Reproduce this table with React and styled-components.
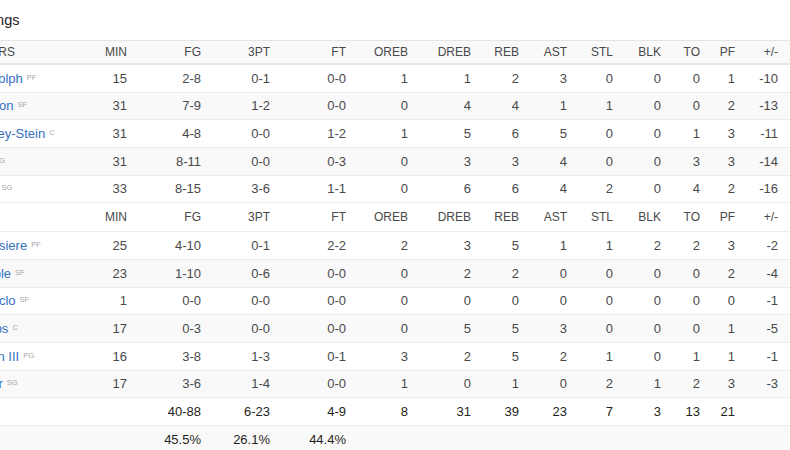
import React from "react";
import styled, { createGlobalStyle } from "styled-components";

const Global = createGlobalStyle`
  html, body { margin: 0; padding: 0; background: #fff; overflow: hidden; }
  body { font-family: "Liberation Sans", Arial, sans-serif; }
`;

const COLS = "143px 40px 74px 69px 76px 62px 63px 48px 48px 46px 48px 39px 35px 55px";

const Page = styled.div`
  width: 920px;
  margin-left: -124px;
`;

const Title = styled.h2`
  margin: 0;
  padding: 11px 0 0 25px;
  height: 40px;
  box-sizing: border-box;
  font-size: 14.5px;
  line-height: 18px;
  font-weight: 400;
  color: #1f2021;
`;

const Table = styled.div`
  margin-left: 68px;
  width: 846px;
  border-top: 1px solid #e4e4e4;
`;

const Row = styled.div`
  display: grid;
  grid-template-columns: ${COLS};
  align-items: center;
  box-sizing: border-box;
  height: ${(p) => p.$h || 27.67}px;
  border-bottom: ${(p) => (p.$thick ? "2px solid #e6e6e6" : "1px solid #ececec")};
  background: ${(p) => (p.$gray ? "#f9f9f9" : "#fff")};
  font-size: 13px;
  color: ${(p) => (p.$total ? "#1e1f20" : "#48494a")};
`;

const HeadCell = styled.div`
  font-size: 12px;
  color: #48494a;
  text-align: ${(p) => (p.$left ? "left" : "right")};
  padding-left: ${(p) => (p.$left ? "8px" : "0")};
  padding-right: ${(p) => (p.$last ? "12px" : "0")};
  white-space: nowrap;
  overflow: hidden;
`;

const Cell = styled.div`
  text-align: right;
  padding-right: ${(p) => (p.$last ? "12px" : "0")};
  white-space: nowrap;
`;

const NameCell = styled.div`
  padding-left: 8px;
  white-space: nowrap;
  overflow: hidden;
`;

const PlayerLink = styled.a`
  color: #3470bf;
  text-decoration: none;
`;

const Pos = styled.span`
  margin-left: 4px;
  font-size: 7.5px;
  color: #a5a6a7;
  vertical-align: 3px;
`;

const HEAD = ["MIN", "FG", "3PT", "FT", "OREB", "DREB", "REB", "AST", "STL", "BLK", "TO", "PF", "+/-"];

const starters = [
  ["Z. Randolph", "PF", 15, "2-8", "0-1", "0-0", 1, 1, 2, 3, 0, 0, 0, 1, -10],
  ["J. Jackson", "SF", 31, "7-9", "1-2", "0-0", 0, 4, 4, 1, 1, 0, 0, 2, -13],
  ["W. Cauley-Stein", "C", 31, "4-8", "0-0", "1-2", 1, 5, 6, 5, 0, 0, 1, 3, -11],
  ["D. Fox", "PG", 31, "8-11", "0-0", "0-3", 0, 3, 3, 4, 0, 0, 3, 3, -14],
  ["B. Hield", "SG", 33, "8-15", "3-6", "1-1", 0, 6, 6, 4, 2, 0, 4, 2, -16],
];

const bench = [
  ["S. Labissiere", "PF", 25, "4-10", "0-1", "2-2", 2, 3, 5, 1, 1, 2, 2, 3, -2],
  ["G. Temple", "SF", 23, "1-10", "0-6", "0-0", 0, 2, 2, 0, 0, 0, 0, 2, -4],
  ["B. Caboclo", "SF", 1, "0-0", "0-0", "0-0", 0, 0, 0, 0, 0, 0, 0, 0, -1],
  ["K. Koufos", "C", 17, "0-3", "0-0", "0-0", 0, 5, 5, 3, 0, 0, 0, 1, -5],
  ["F. Mason III", "PG", 16, "3-8", "1-3", "0-1", 3, 2, 5, 2, 1, 0, 1, 1, -1],
  ["V. Carter", "SG", 17, "3-6", "1-4", "0-0", 1, 0, 1, 0, 2, 1, 2, 3, -3],
];

const totals = ["", "40-88", "6-23", "4-9", 8, 31, 39, 23, 7, 3, 13, 21, ""];
const pcts = ["", "45.5%", "26.1%", "44.4%", "", "", "", "", "", "", "", "", ""];

function Header({ label, gray, thick, h }) {
  return (
    <Row $gray={gray} $thick={thick} $h={h}>
      <HeadCell $left>{label}</HeadCell>
      {HEAD.map((c, i) => (
        <HeadCell key={c} $last={i === HEAD.length - 1}>{c}</HeadCell>
      ))}
    </Row>
  );
}

function PlayerRow({ p, gray }) {
  const [name, pos, ...stats] = p;
  return (
    <Row $gray={gray}>
      <NameCell>
        <PlayerLink href="#">{name}</PlayerLink>
        <Pos>{pos}</Pos>
      </NameCell>
      {stats.map((s, i) => (
        <Cell key={i} $last={i === stats.length - 1}>{s}</Cell>
      ))}
    </Row>
  );
}

function SumRow({ label, vals, gray }) {
  return (
    <Row $gray={gray} $total>
      <NameCell>{label}</NameCell>
      {vals.map((s, i) => (
        <Cell key={i} $last={i === vals.length - 1}>{s}</Cell>
      ))}
    </Row>
  );
}

export default function App() {
  return (
    <>
      <Global />
      <Page>
        <Title>Sacramento Kings</Title>
        <Table>
          <Header label="STARTERS" gray thick h={24} />
          {starters.map((p, i) => (
            <PlayerRow key={p[0]} p={p} gray={i % 2 === 1} />
          ))}
          <Header label="BENCH" h={29} />
          {bench.map((p, i) => (
            <PlayerRow key={p[0]} p={p} gray={i % 2 === 1} />
          ))}
          <SumRow label="TEAM" vals={totals} />
          <SumRow label="" vals={pcts} gray />
        </Table>
      </Page>
    </>
  );
}
